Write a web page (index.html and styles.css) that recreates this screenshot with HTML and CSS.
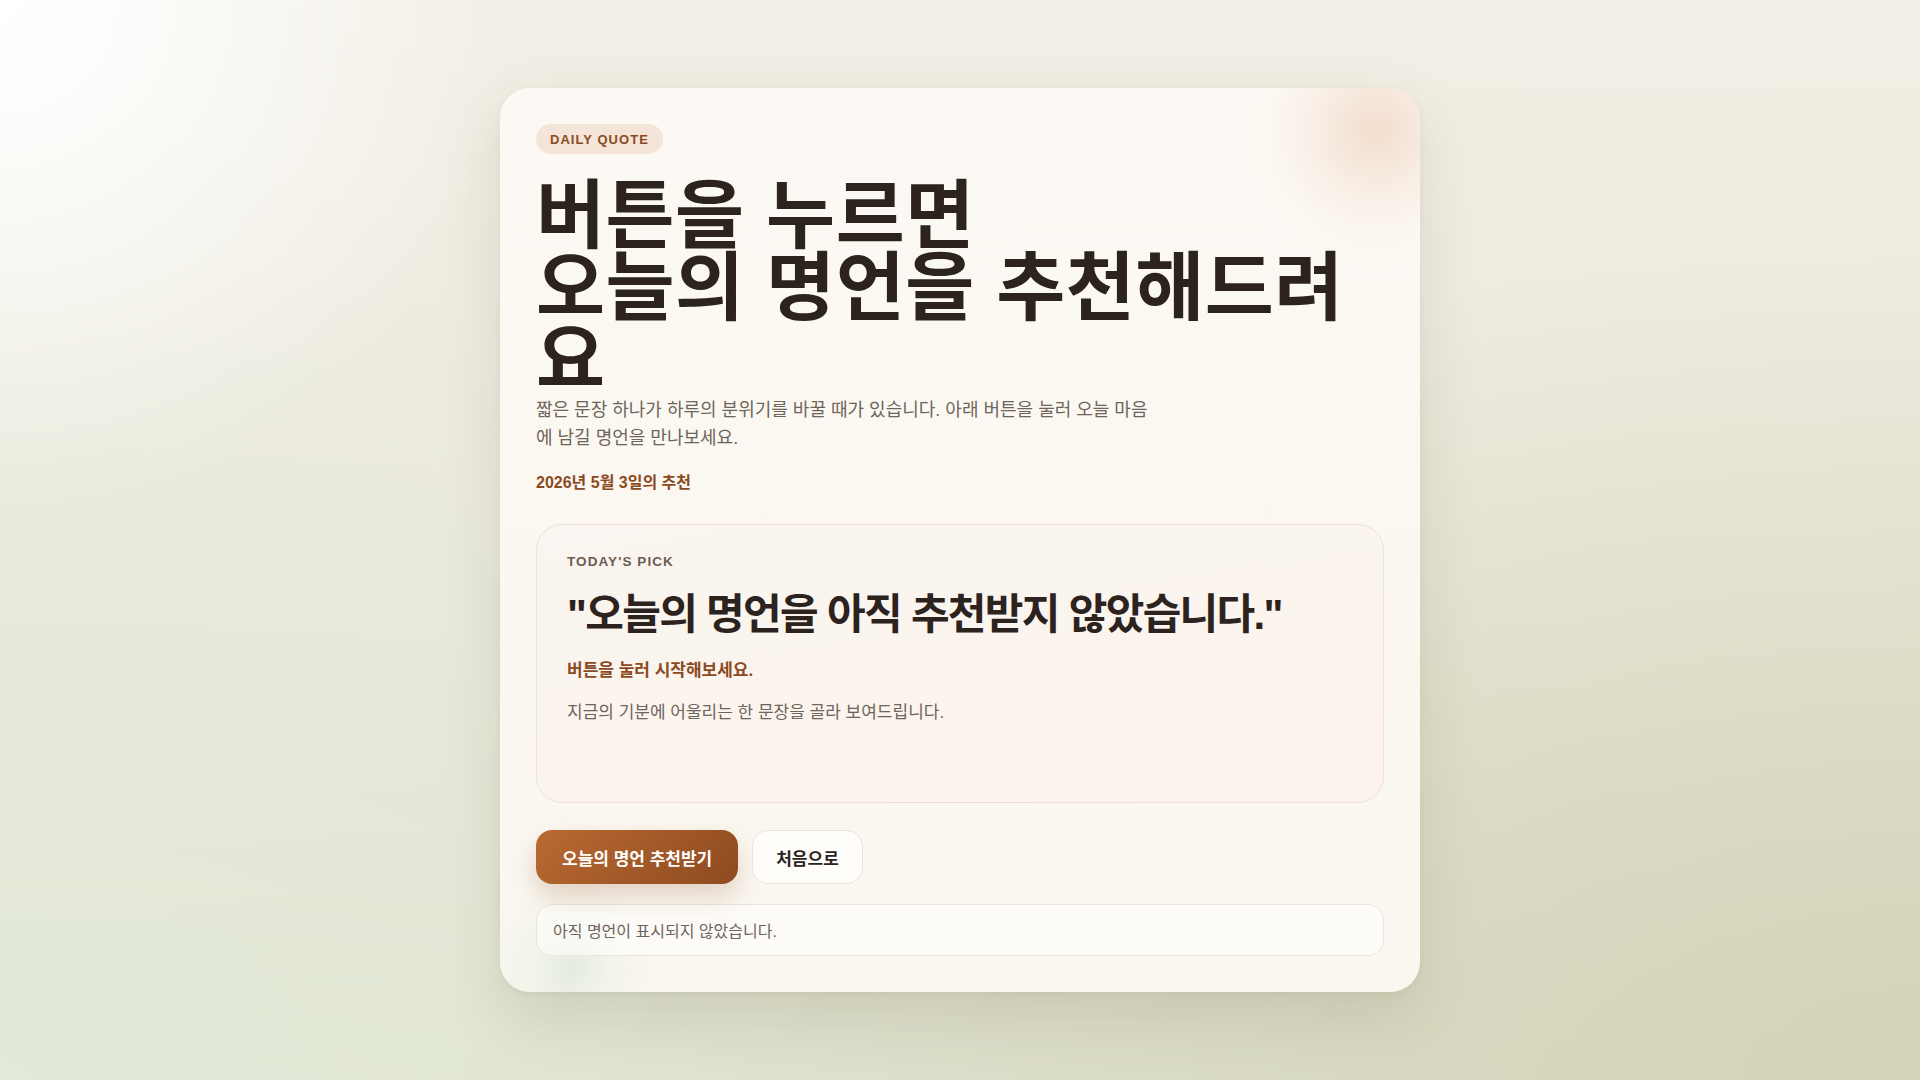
FILE: index.html
```html
<!DOCTYPE html>
<html lang="ko">
<head>
<meta charset="utf-8">
<title>Daily Quote</title>
<link rel="stylesheet" href="styles.css">
</head>
<body>
<main class="card">
  <span class="badge">DAILY QUOTE</span>
  <h1 class="title">버튼을 누르면<br>오늘의 명언을 추천해드려요</h1>
  <p class="lead">짧은 문장 하나가 하루의 분위기를 바꿀 때가 있습니다. 아래 버튼을 눌러 오늘 마음에 남길 명언을 만나보세요.</p>
  <p class="date">2026년 5월 3일의 추천</p>
  <section class="pick">
    <p class="pick-label">TODAY'S PICK</p>
    <p class="pick-quote">"오늘의 명언을 아직 추천받지 않았습니다."</p>
    <p class="pick-author">버튼을 눌러 시작해보세요.</p>
    <p class="pick-desc">지금의 기분에 어울리는 한 문장을 골라 보여드립니다.</p>
  </section>
  <div class="actions">
    <button class="btn btn-primary" type="button">오늘의 명언 추천받기</button>
    <button class="btn btn-ghost" type="button">처음으로</button>
  </div>
  <div class="status">아직 명언이 표시되지 않았습니다.</div>
</main>
</body>
</html>
```

FILE: styles.css
```css
* { box-sizing: border-box; }

html, body { height: 100%; }

body {
  margin: 0;
  min-height: 100vh;
  display: flex;
  align-items: center;
  justify-content: center;
  font-family: "Liberation Sans", "Noto Sans CJK KR", sans-serif;
  color: #2c231e;
  background:
    radial-gradient(circle at 0 0, #ffffff 0, rgba(255,255,255,0.85) 120px, rgba(255,255,255,0) 520px),
    radial-gradient(ellipse at 100% 100%, #d4d3b8 0, rgba(212,211,184,0) 55%),
    radial-gradient(ellipse at 0 100%, #e3e9d8 0, rgba(227,233,216,0) 55%),
    linear-gradient(180deg, #f2eee5 0%, #ebeadd 55%, #dfe2d0 100%);
}

.card {
  position: relative;
  width: 920px;
  padding: 36px;
  border-radius: 30px;
  overflow: hidden;
  background:
    radial-gradient(circle at 876px 42px, rgba(240,214,196,0.8) 0, rgba(243,224,210,0.45) 60px, rgba(247,236,226,0.15) 105px, rgba(250,245,238,0) 140px),
    radial-gradient(circle at 70px 880px, rgba(226,234,220,0.9) 0, rgba(232,238,226,0.4) 40px, rgba(250,248,242,0) 90px),
    linear-gradient(180deg, #fcf9f4 0%, #faf7f0 100%);
  box-shadow: 0 26px 60px rgba(90, 80, 50, 0.14), 0 2px 6px rgba(90, 80, 50, 0.06);
}

.badge {
  display: inline-flex;
  align-items: center;
  height: 30px;
  padding: 0 14px;
  border-radius: 15px;
  background: #f4e5d8;
  color: #8b4a22;
  font-size: 13px;
  font-weight: 700;
  letter-spacing: 0.08em;
}

.title {
  margin: 20px 0 0;
  font-family: "Noto Sans CJK KR", "Liberation Sans", sans-serif;
  font-size: 75px;
  line-height: 72px;
  font-weight: 700;
  letter-spacing: 0.007em;
  color: #2c231e;
}

.lead {
  margin: 6px 0 0;
  max-width: 616px;
  font-size: 18px;
  line-height: 28px;
  color: #6f645b;
}

.date {
  margin: 20px 0 0;
  font-size: 16px;
  line-height: 22px;
  font-weight: 700;
  color: #8b4a22;
}

.pick {
  margin-top: 30px;
  min-height: 279px;
  padding: 29px 30px;
  border: 1px solid #f1dfd0;
  border-radius: 26px;
  background: linear-gradient(170deg, #faf5f0 0%, #fcf4ec 100%);
}

.pick p { margin: 0; }

.pick-label {
  font-size: 13.5px;
  line-height: 16px;
  font-weight: 700;
  letter-spacing: 0.08em;
  color: #6b5b50;
}

.pick .pick-quote {
  margin-top: 19px;
  font-size: 42px;
  line-height: 52px;
  font-weight: 700;
  letter-spacing: -0.04em;
  color: #2c231e;
}

.pick .pick-author {
  margin-top: 18px;
  font-size: 17px;
  line-height: 24px;
  font-weight: 700;
  color: #8b4a22;
}

.pick .pick-desc {
  margin-top: 17px;
  font-size: 17px;
  line-height: 26px;
  color: #6f645b;
}

.actions {
  display: flex;
  gap: 14px;
  margin-top: 27px;
}

.btn {
  height: 54px;
  border-radius: 16px;
  font-family: inherit;
  font-size: 17px;
  font-weight: 700;
  cursor: pointer;
}

.btn-primary {
  padding: 0 26px;
  border: 0;
  color: #ffffff;
  background: linear-gradient(135deg, #b96a31 0%, #8e4a20 100%);
  box-shadow: 0 12px 26px rgba(143, 75, 32, 0.22);
}

.btn-ghost {
  padding: 0 23px;
  border: 1px solid #ece3d9;
  color: #2c231e;
  background: #fffdfa;
}

.status {
  display: flex;
  align-items: center;
  height: 52px;
  margin-top: 20px;
  padding: 0 16px;
  border: 1px solid #ebe5dc;
  border-radius: 16px;
  background: rgba(255, 255, 255, 0.55);
  font-size: 16px;
  color: #6f645b;
}
```
